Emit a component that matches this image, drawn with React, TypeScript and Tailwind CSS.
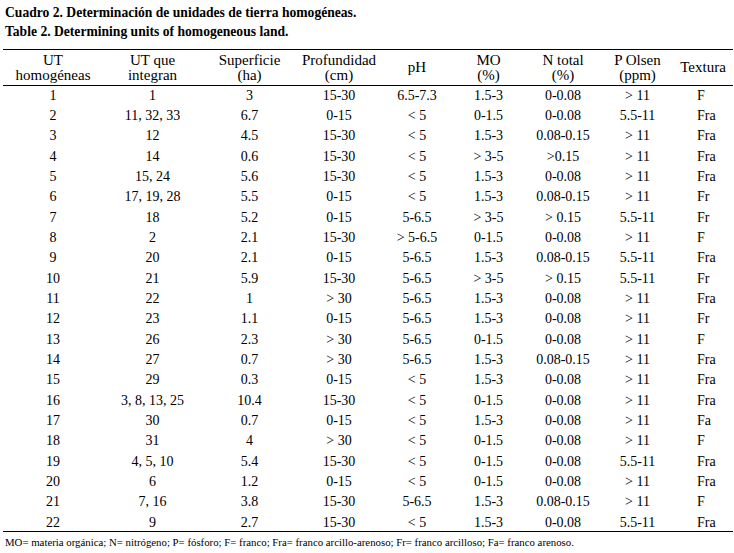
const rows: string[][] = [
  ["1", "1", "3", "15-30", "6.5-7.3", "1.5-3", "0-0.08", "> 11", "F"],
  ["2", "11, 32, 33", "6.7", "0-15", "< 5", "0-1.5", "0-0.08", "5.5-11", "Fra"],
  ["3", "12", "4.5", "15-30", "< 5", "1.5-3", "0.08-0.15", "> 11", "Fra"],
  ["4", "14", "0.6", "15-30", "< 5", "> 3-5", ">0.15", "> 11", "Fra"],
  ["5", "15, 24", "5.6", "15-30", "< 5", "1.5-3", "0-0.08", "> 11", "Fra"],
  ["6", "17, 19, 28", "5.5", "0-15", "< 5", "1.5-3", "0.08-0.15", "> 11", "Fr"],
  ["7", "18", "5.2", "0-15", "5-6.5", "> 3-5", "> 0.15", "5.5-11", "Fr"],
  ["8", "2", "2.1", "15-30", "> 5-6.5", "0-1.5", "0-0.08", "> 11", "F"],
  ["9", "20", "2.1", "0-15", "5-6.5", "1.5-3", "0.08-0.15", "5.5-11", "Fra"],
  ["10", "21", "5.9", "15-30", "5-6.5", "> 3-5", "> 0.15", "5.5-11", "Fr"],
  ["11", "22", "1", "> 30", "5-6.5", "1.5-3", "0-0.08", "> 11", "Fra"],
  ["12", "23", "1.1", "0-15", "5-6.5", "1.5-3", "0-0.08", "> 11", "Fr"],
  ["13", "26", "2.3", "> 30", "5-6.5", "0-1.5", "0-0.08", "> 11", "F"],
  ["14", "27", "0.7", "> 30", "5-6.5", "1.5-3", "0.08-0.15", "> 11", "Fra"],
  ["15", "29", "0.3", "0-15", "< 5", "1.5-3", "0-0.08", "> 11", "Fra"],
  ["16", "3, 8, 13, 25", "10.4", "15-30", "< 5", "0-1.5", "0-0.08", "> 11", "Fra"],
  ["17", "30", "0.7", "0-15", "< 5", "1.5-3", "0-0.08", "> 11", "Fa"],
  ["18", "31", "4", "> 30", "< 5", "0-1.5", "0-0.08", "> 11", "F"],
  ["19", "4, 5, 10", "5.4", "15-30", "< 5", "0-1.5", "0-0.08", "5.5-11", "Fra"],
  ["20", "6", "1.2", "0-15", "< 5", "0-1.5", "0-0.08", "> 11", "Fra"],
  ["21", "7, 16", "3.8", "15-30", "5-6.5", "1.5-3", "0.08-0.15", "> 11", "F"],
  ["22", "9", "2.7", "15-30", "< 5", "1.5-3", "0-0.08", "5.5-11", "Fra"],
];

const headers: [string, string?][] = [
  ["UT", "homogéneas"],
  ["UT que", "integran"],
  ["Superficie", "(ha)"],
  ["Profundidad", "(cm)"],
  ["pH"],
  ["MO", "(%)"],
  ["N total", "(%)"],
  ["P Olsen", "(ppm)"],
  ["Textura"],
];

const widths = [100, 99, 95, 84, 72, 71, 78, 71, 60];

export default function App() {
  return (
    <div className="w-[734px] h-[553px] bg-white text-black [font-family:'Liberation_Serif',serif] overflow-hidden">
      {/* caption */}
      <div className="pt-[3px] pl-[5px] text-[13.6px] font-bold leading-[19px]">
        <p>Cuadro 2. Determinación de unidades de tierra homogéneas.</p>
        <p>Table 2. Determining units of homogeneous land.</p>
      </div>

      <table className="ml-[3px] mt-[8px] w-[730px] table-fixed border-collapse">
        <colgroup>
          {widths.map((w, i) => (
            <col key={i} style={{ width: w }} />
          ))}
        </colgroup>
        <thead>
          <tr className="h-[36px] border-t border-b border-black">
            {headers.map(([a, b], i) => (
              <th key={i} className="p-0 font-normal text-[15px] leading-[15px] text-center align-middle">
                <div>{a}</div>
                {b && <div>{b}</div>}
              </th>
            ))}
          </tr>
        </thead>
        <tbody className="border-b border-black">
          {rows.map((r, ri) => {
            const last = ri === rows.length - 1;
            return (
              <tr key={ri} className={last ? "h-[18.3px]" : "h-[20.33px]"}>
                {r.map((c, ci) => (
                  <td
                    key={ci}
                    className={[
                      "p-0 text-[14px] leading-[16px] whitespace-nowrap",
                      ci === 8 ? "pl-[24px] text-left" : "text-center",
                      last ? "align-top pt-[3px]" : "align-middle",
                    ].join(" ")}
                  >
                    {c}
                  </td>
                ))}
              </tr>
            );
          })}
        </tbody>
      </table>

      <p className="mt-[4px] pl-[5px] text-[10.8px] leading-[12px]">
        MO= materia orgánica; N= nitrógeno; P= fósforo; F= franco; Fra= franco arcillo-arenoso; Fr= franco arcilloso; Fa= franco arenoso.
      </p>
    </div>
  );
}
